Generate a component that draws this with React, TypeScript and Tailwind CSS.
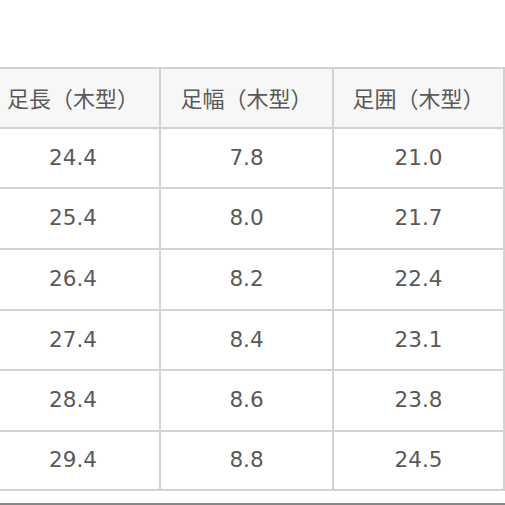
import React from "react";

const rows = [
  ["24.4", "7.8", "21.0"],
  ["25.4", "8.0", "21.7"],
  ["26.4", "8.2", "22.4"],
  ["27.4", "8.4", "23.1"],
  ["28.4", "8.6", "23.8"],
  ["29.4", "8.8", "24.5"],
];

const headers = ["足長（木型）", "足幅（木型）", "足囲（木型）"];

export default function App() {
  return (
    <div className="w-[505px] h-[505px] overflow-hidden bg-white pt-[67px] font-['DejaVu_Sans','Noto_Sans_CJK_JP',sans-serif] text-[#595959]">
      <div className="ml-[-15px] w-[520px] grid grid-cols-[172px_171px_169px] grid-rows-[58px_58px_59px_59px_58px_59px_57px] gap-[2px] p-[2px] bg-[#d2d2d2]">
        {headers.map((h) => (
          <div
            key={h}
            className="bg-[#f7f7f7] flex items-center justify-center pb-[2px] text-[22px] font-['Noto_Sans_CJK_JP',sans-serif]"
          >
            {h}
          </div>
        ))}
        {rows.map((r, i) =>
          r.map((v, j) => (
            <div
              key={`${i}-${j}`}
              className="bg-white flex items-center justify-center text-[21.5px]"
            >
              {v}
            </div>
          ))
        )}
      </div>
      <div className="mt-[12px] h-[2px] w-full bg-[#858585]" />
    </div>
  );
}
